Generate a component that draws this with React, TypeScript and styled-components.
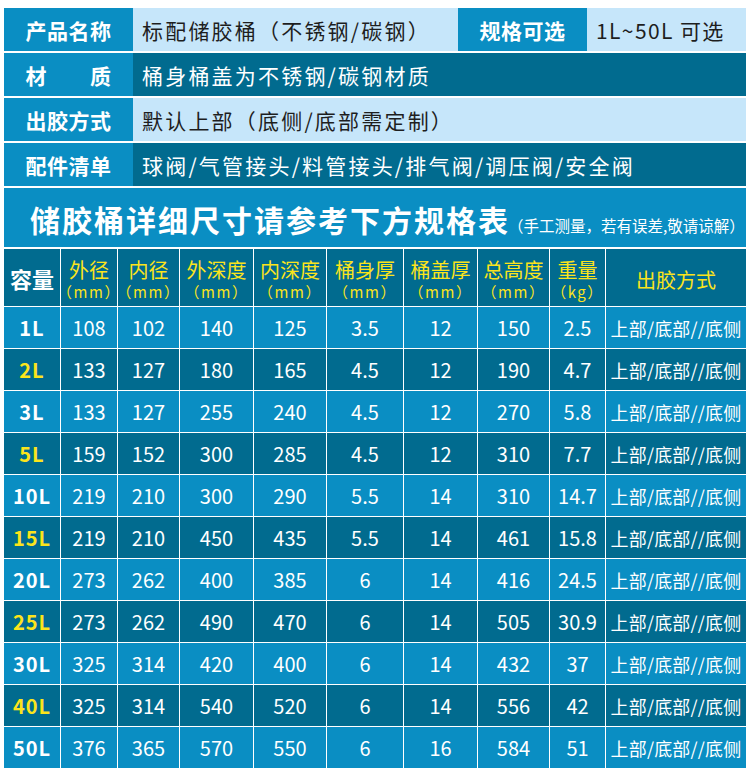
import styled, { createGlobalStyle } from 'styled-components';

const GlobalStyle = createGlobalStyle`
  html, body {
    margin: 0;
    padding: 0;
    background: #ffffff;
  }
  body {
    font-family: "Noto Sans CJK SC", "Noto Sans", sans-serif;
  }
`;

const BLUE = '#0a8ec3';
const TEAL = '#016b8f';
const PALE = '#c6e6fa';
const YELLOW = '#fbe41c';

const specs = [
  ['1L', '108', '102', '140', '125', '3.5', '12', '150', '2.5'],
  ['2L', '133', '127', '180', '165', '4.5', '12', '190', '4.7'],
  ['3L', '133', '127', '255', '240', '4.5', '12', '270', '5.8'],
  ['5L', '159', '152', '300', '285', '4.5', '12', '310', '7.7'],
  ['10L', '219', '210', '300', '290', '5.5', '14', '310', '14.7'],
  ['15L', '219', '210', '450', '435', '5.5', '14', '461', '15.8'],
  ['20L', '273', '262', '400', '385', '6', '14', '416', '24.5'],
  ['25L', '273', '262', '490', '470', '6', '14', '505', '30.9'],
  ['30L', '325', '314', '420', '400', '6', '14', '432', '37'],
  ['40L', '325', '314', '540', '520', '6', '14', '556', '42'],
  ['50L', '376', '365', '570', '550', '6', '16', '584', '51'],
];

const headers = [
  ['外径', '（mm）'],
  ['内径', '（mm）'],
  ['外深度', '（mm）'],
  ['内深度', '（mm）'],
  ['桶身厚', '（mm）'],
  ['桶盖厚', '（mm）'],
  ['总高度', '（mm）'],
  ['重量', '（kg）'],
];

function App() {
  return (
    <>
      <GlobalStyle />
      <Page>
        <InfoRow $cols="129px 325px 129px 1fr">
          <Label>产品名称</Label>
          <Value $dark={false}>标配储胶桶（不锈钢/碳钢）</Value>
          <Label>规格可选</Label>
          <Value $dark={false} $tight>
            1L~50L 可选
          </Value>
        </InfoRow>
        <InfoRow $cols="129px 1fr">
          <Label>材　　质</Label>
          <Value $dark>桶身桶盖为不锈钢/碳钢材质</Value>
        </InfoRow>
        <InfoRow $cols="129px 1fr">
          <Label>出胶方式</Label>
          <Value $dark={false}>默认上部（底侧/底部需定制）</Value>
        </InfoRow>
        <InfoRow $cols="129px 1fr">
          <Label>配件清单</Label>
          <Value $dark>球阀/气管接头/料管接头/排气阀/调压阀/安全阀</Value>
        </InfoRow>

        <TitleBand>
          <Title>储胶桶详细尺寸请参考下方规格表</Title>
          <Note>（手工测量，若有误差,敬请谅解）</Note>
        </TitleBand>

        <SpecGrid>
          <HeadCell $dark>
            <CapacityHead>容量</CapacityHead>
          </HeadCell>
          {headers.map(([name, unit]) => (
            <HeadCell $dark key={name}>
              <HeadName>{name}</HeadName>
              <HeadUnit>{unit}</HeadUnit>
            </HeadCell>
          ))}
          <HeadCell $dark>
            <HeadName>出胶方式</HeadName>
          </HeadCell>

          {specs.map((row, i) => {
            const dark = i % 2 === 1;
            return [
              <Cell $dark={dark} key={row[0] + 'c'}>
                <Capacity $yellow={dark}>{row[0]}</Capacity>
              </Cell>,
              ...row.slice(1).map((v, j) => (
                <Cell $dark={dark} key={row[0] + j}>
                  {v}
                </Cell>
              )),
              <Cell $dark={dark} key={row[0] + 'o'}>
                <Outlet>上部/底部//底侧</Outlet>
              </Cell>,
            ];
          })}
        </SpecGrid>
      </Page>
    </>
  );
}

var Page = styled.div`
  display: flex;
  flex-direction: column;
  gap: 2px;
  padding: 8px 4px 0;
  width: 742px;
`;

var InfoRow = styled.div<{ $cols: string }>`
  display: grid;
  grid-template-columns: ${(p) => p.$cols};
  height: 43px;
`;

var Label = styled.div`
  display: flex;
  align-items: center;
  justify-content: center;
  background: ${BLUE};
  color: #ffffff;
  font-size: 21px;
  font-weight: 700;
  letter-spacing: 0.5px;
`;

var Value = styled.div<{ $dark: boolean; $tight?: boolean }>`
  display: flex;
  align-items: center;
  padding-left: 9px;
  background: ${(p) => (p.$dark ? TEAL : PALE)};
  color: ${(p) => (p.$dark ? '#ffffff' : '#1e1e1e')};
  font-size: 21px;
  letter-spacing: ${(p) => (p.$tight ? '1.4px' : '2.2px')};
  white-space: nowrap;
`;

var TitleBand = styled.div`
  display: flex;
  align-items: baseline;
  height: 59px;
  padding: 9px 0 0 26px;
  box-sizing: border-box;
  background: ${BLUE};
  color: #ffffff;
  white-space: nowrap;
`;

var Title = styled.span`
  font-size: 30px;
  font-weight: 700;
  letter-spacing: 2px;
`;

var Note = styled.span`
  font-size: 15.5px;
  margin-left: -2px;
`;

var SpecGrid = styled.div`
  display: grid;
  grid-template-columns: 56px 56px 61px 73px 72px 76px 73px 71px 55px 1fr;
  grid-template-rows: 57px;
  grid-auto-rows: 41px;
  gap: 1px;
  background: #ffffff;
`;

var Cell = styled.div<{ $dark: boolean }>`
  display: flex;
  align-items: center;
  justify-content: center;
  background: ${(p) => (p.$dark ? TEAL : BLUE)};
  color: #ffffff;
  font-size: 20px;
  white-space: nowrap;
`;

var HeadCell = styled(Cell)`
  flex-direction: column;
  padding-top: 5px;
  box-sizing: border-box;
`;

var CapacityHead = styled.span`
  font-size: 22px;
  font-weight: 700;
  line-height: 26px;
  margin-top: -5px;
  color: #ffffff;
`;

var HeadName = styled.span`
  font-size: 20px;
  line-height: 24px;
  color: ${YELLOW};
`;

var HeadUnit = styled.span`
  font-size: 15px;
  line-height: 20px;
  letter-spacing: 1.5px;
  color: ${YELLOW};
`;

var Capacity = styled.span<{ $yellow: boolean }>`
  font-size: 20px;
  font-weight: 700;
  letter-spacing: 1px;
  color: ${(p) => (p.$yellow ? YELLOW : '#ffffff')};
`;

var Outlet = styled.span`
  font-size: 18px;
  letter-spacing: 0.2px;
`;

export default App;
